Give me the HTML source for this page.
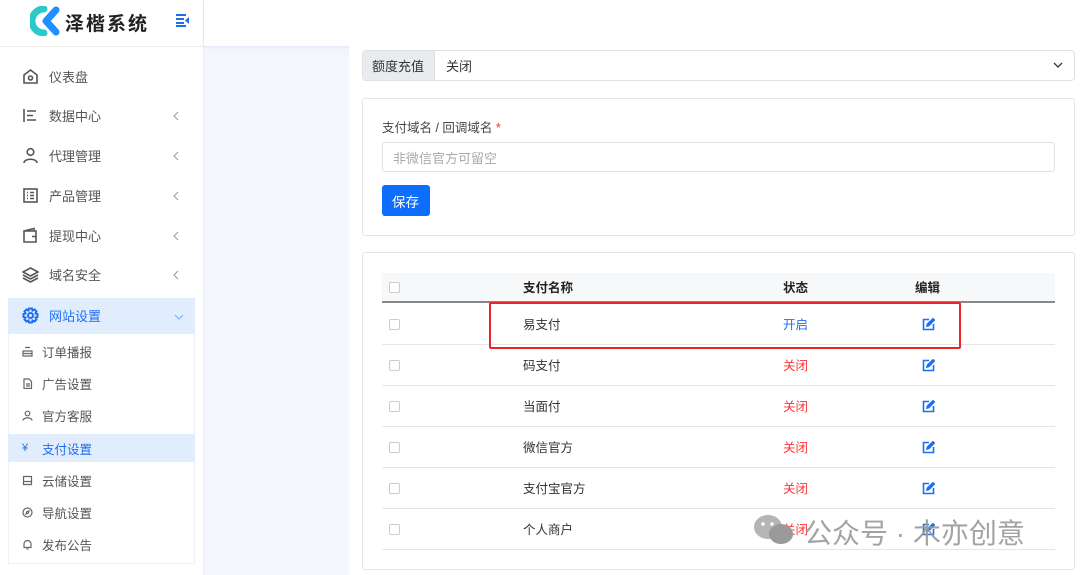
<!DOCTYPE html>
<html><head><meta charset="utf-8"><style>
*{margin:0;padding:0;box-sizing:border-box}
body{width:1080px;height:575px;overflow:hidden;background:#f5f6fd;font-family:"Liberation Sans","Noto Sans CJK SC",sans-serif;font-size:13px;color:#555;position:relative}
.abs{position:absolute}
.side{left:0;top:0;width:203px;height:575px;background:#fff;box-shadow:1px 0 3px rgba(100,100,200,.08)}
.hdr{left:204px;top:0;width:876px;height:46px;background:#fff;box-shadow:0 1px 3px rgba(100,100,220,.12)}
.main{left:349px;top:46px;width:731px;height:529px;background:#fff}
.mi{position:absolute;left:22px;font-size:13px;color:#555;display:flex;align-items:center}
.mi svg{margin-right:10px}
.arr{position:absolute;left:173px}
.si{position:absolute;left:8px;width:187px;height:28px;display:flex;align-items:center;padding-left:14px;font-size:12.5px;color:#555}
.si svg{margin-right:9px}
.row{position:absolute;left:382px;width:673px;height:41px;border-bottom:1px solid #e6e6e6}
.row .cb{position:absolute;left:7px;top:15px;width:11px;height:11px;border:1px solid #ccc;border-radius:2px}
.row .n{position:absolute;left:141px;top:10px;color:#333;font-size:12.5px}
.row .s{position:absolute;left:401px;top:10px;color:#f33;font-size:12.5px}
.row .e{position:absolute;left:540px;top:14px}
</style></head><body>
<div class="abs side">
 <svg class="abs" style="left:30px;top:6px" width="32" height="30" viewBox="0 0 32 30"><path d="M14 3 A12 12 0 1 0 14 27" stroke="#2cc9c9" stroke-width="7" fill="none" stroke-linecap="round"/><path d="M26 4 L16 15 L26 26" stroke="#1e90ff" stroke-width="7" fill="none" stroke-linecap="round" stroke-linejoin="round"/></svg>
 <div class="abs" style="left:65px;top:9px;font-size:19px;font-weight:bold;color:#222;letter-spacing:2px">泽楷系统</div>
 <svg class="abs" style="left:176px;top:14px" width="13" height="13"><g fill="#1e6ff0"><rect x="0" y="0" width="10" height="2"/><rect x="0" y="4" width="8" height="2"/><rect x="0" y="8" width="8" height="2"/><rect x="0" y="11" width="10" height="2"/><path d="M13 3 L9 6.5 L13 10Z"/></g></svg>
 <div class="abs" style="left:0;top:46px;width:203px;height:1px;background:#eee"></div>
 <div class="mi" style="top:67px"><svg width="17" height="17" viewBox="0 0 17 17" fill="none" stroke="#555" stroke-width="1.6"><path d="M2 7 L8.5 2 L15 7 V15 H2Z"/><circle cx="8.5" cy="10" r="2"/></svg>仪表盘</div>
 <div class="mi" style="top:106px"><svg width="17" height="17" viewBox="0 0 17 17" fill="none" stroke="#555" stroke-width="1.6"><path d="M2 2V15M5 4H14M5 8.5H11M5 13H14"/></svg>数据中心</div>
 <div class="mi" style="top:146px"><svg width="17" height="17" viewBox="0 0 17 17" fill="none" stroke="#555" stroke-width="1.6"><circle cx="8.5" cy="5" r="3.3"/><path d="M2 16C2 11 15 11 15 16"/></svg>代理管理</div>
 <div class="mi" style="top:186px"><svg width="17" height="17" viewBox="0 0 17 17" fill="none" stroke="#555" stroke-width="1.6"><rect x="2" y="2" width="13" height="13"/><path d="M5 5.5H6M8 5.5H12M5 8.5H6M8 8.5H12M5 11.5H6M8 11.5H12"/></svg>产品管理</div>
 <div class="mi" style="top:226px"><svg width="17" height="17" viewBox="0 0 17 17" fill="none" stroke="#555" stroke-width="1.6"><path d="M2 4H14V15H2ZM2 4L12 1.5V4M10 9.5H14"/></svg>提现中心</div>
 <div class="mi" style="top:265px"><svg width="17" height="17" viewBox="0 0 17 17" fill="none" stroke="#555" stroke-width="1.6"><path d="M8.5 2L16 6L8.5 10L1 6ZM1 9L8.5 13L16 9M1 12L8.5 16L16 12"/></svg>域名安全</div>
 <svg class="arr" style="top:111px" width="6" height="10"><path d="M5 1L1 5L5 9" stroke="#999" fill="none"/></svg>
 <svg class="arr" style="top:151px" width="6" height="10"><path d="M5 1L1 5L5 9" stroke="#999" fill="none"/></svg>
 <svg class="arr" style="top:191px" width="6" height="10"><path d="M5 1L1 5L5 9" stroke="#999" fill="none"/></svg>
 <svg class="arr" style="top:231px" width="6" height="10"><path d="M5 1L1 5L5 9" stroke="#999" fill="none"/></svg>
 <svg class="arr" style="top:270px" width="6" height="10"><path d="M5 1L1 5L5 9" stroke="#999" fill="none"/></svg>
 <div class="abs" style="left:8px;top:298px;width:187px;height:266px;border:1px solid #eef0f5"></div>
 <div class="abs" style="left:8px;top:298px;width:187px;height:36px;background:#e1ecfd"></div>
 <div class="mi" style="top:306px;color:#1e6ff0"><svg width="17" height="17" viewBox="0 0 17 17" fill="none" stroke="#1e6ff0" stroke-width="2"><circle cx="8.5" cy="8.5" r="2.5"/><path d="M7 1.5H10L10.5 3.5L12.5 2.5L14.5 4.5L13.5 6.5L15.5 7V10L13.5 10.5L14.5 12.5L12.5 14.5L10.5 13.5L10 15.5H7L6.5 13.5L4.5 14.5L2.5 12.5L3.5 10.5L1.5 10V7L3.5 6.5L2.5 4.5L4.5 2.5L6.5 3.5Z"/></svg>网站设置</div>
 <svg class="arr" style="left:174px;top:314px" width="10" height="6"><path d="M1 1L5 5L9 1" stroke="#7aa8f0" fill="none"/></svg>
 <div class="si" style="top:337px"><svg width="11" height="11" fill="none" stroke="#666" stroke-width="1.2"><path d="M3 1.5H8M1 5H10V10H1ZM1 7.5H10"/></svg>订单播报</div>
 <div class="si" style="top:369px"><svg width="11" height="11" fill="none" stroke="#666" stroke-width="1.2"><path d="M2 1H7L9.5 3.5V10.5H2ZM4 6H8M4 8H8"/></svg>广告设置</div>
 <div class="si" style="top:401px"><svg width="11" height="11" fill="none" stroke="#666" stroke-width="1.2"><circle cx="5.5" cy="3.5" r="2.3"/><path d="M1 10.5C1 7 10 7 10 10.5"/></svg>官方客服</div>
 <div class="si" style="top:434px;background:#e1ecfd;color:#1e6ff0"><span style="width:20px;font-size:11px;color:#1e6ff0">¥</span>支付设置</div>
 <div class="si" style="top:466px"><svg width="11" height="11" fill="none" stroke="#666" stroke-width="1.2"><path d="M1.5 1.5H9.5V9.5H1.5ZM1.5 6.5H9.5"/></svg>云储设置</div>
 <div class="si" style="top:498px"><svg width="11" height="11" fill="none" stroke="#666" stroke-width="1.2"><circle cx="5.5" cy="5.5" r="4.5"/><path d="M4 7L5 4.5L7 4L6 6.5Z"/></svg>导航设置</div>
 <div class="si" style="top:530px"><svg width="11" height="11" fill="none" stroke="#666" stroke-width="1.2"><path d="M2 8.5V5A3.5 3.5 0 0 1 9 5V8.5H1.5H9.5M4.5 10H6.5"/></svg>发布公告</div>
</div>
<div class="abs hdr"></div>
<div class="abs main"></div>
<div class="abs" style="left:362px;top:50px;width:713px;height:31px;border:1px solid #dee2e6;border-radius:4px;background:#fff"></div>
<div class="abs" style="left:363px;top:51px;width:72px;height:29px;background:#e9ecef;border-right:1px solid #dee2e6;font-size:13px;color:#333;padding:5px 0 0 9px">额度充值</div>
<div class="abs" style="left:446px;top:56px;color:#333">关闭</div>
<svg class="abs" style="left:1053px;top:62px" width="10" height="6"><path d="M1 1L5 5L9 1" stroke="#333" stroke-width="1.3" fill="none"/></svg>
<div class="abs" style="left:362px;top:98px;width:713px;height:138px;border:1px solid #e6e6e6;border-radius:3px"></div>
<div class="abs" style="left:382px;top:117px;font-size:12.5px;color:#444">支付域名 / 回调域名 <span style="color:#e33">*</span></div>
<div class="abs" style="left:382px;top:142px;width:673px;height:30px;border:1px solid #dee2e6;border-radius:3px;color:#aaa;padding:5px 0 0 10px">非微信官方可留空</div>
<div class="abs" style="left:382px;top:185px;width:48px;height:31px;background:#0d6efd;border-radius:3px;color:#fff;padding:6px 0 0 10px;font-size:13.5px">保存</div>
<div class="abs" style="left:362px;top:252px;width:713px;height:318px;border:1px solid #e6e6e6;border-radius:3px"></div>
<div class="abs" style="left:382px;top:273px;width:673px;height:30px;background:#f7f8fa;border-bottom:2px solid #888"></div>
<div class="abs" style="left:389px;top:282px;width:11px;height:11px;border:1px solid #ccc;border-radius:2px;background:#fff"></div>
<div class="abs" style="left:523px;top:277px;font-weight:bold;color:#222;font-size:12.5px">支付名称</div>
<div class="abs" style="left:783px;top:277px;font-weight:bold;color:#222;font-size:12.5px">状态</div>
<div class="abs" style="left:915px;top:277px;font-weight:bold;color:#222;font-size:12.5px">编辑</div>
<div class="row" style="top:304px"><div class="cb"></div><div class="n">易支付</div><div class="s" style="color:#1e6ff0">开启</div><div class="e"><svg width="13" height="13" viewBox="0 0 13 13" fill="none" stroke="#1e6ff0" stroke-width="1.6"><path d="M7 1.5H1.5V11.5H11.5V6"/><path d="M5 8L5.5 6L11 0.8L12.2 2L6.8 7.5Z" fill="#1e6ff0"/></svg></div></div>
<div class="row" style="top:345px"><div class="cb"></div><div class="n">码支付</div><div class="s">关闭</div><div class="e"><svg width="13" height="13" viewBox="0 0 13 13" fill="none" stroke="#1e6ff0" stroke-width="1.6"><path d="M7 1.5H1.5V11.5H11.5V6"/><path d="M5 8L5.5 6L11 0.8L12.2 2L6.8 7.5Z" fill="#1e6ff0"/></svg></div></div>
<div class="row" style="top:386px"><div class="cb"></div><div class="n">当面付</div><div class="s">关闭</div><div class="e"><svg width="13" height="13" viewBox="0 0 13 13" fill="none" stroke="#1e6ff0" stroke-width="1.6"><path d="M7 1.5H1.5V11.5H11.5V6"/><path d="M5 8L5.5 6L11 0.8L12.2 2L6.8 7.5Z" fill="#1e6ff0"/></svg></div></div>
<div class="row" style="top:427px"><div class="cb"></div><div class="n">微信官方</div><div class="s">关闭</div><div class="e"><svg width="13" height="13" viewBox="0 0 13 13" fill="none" stroke="#1e6ff0" stroke-width="1.6"><path d="M7 1.5H1.5V11.5H11.5V6"/><path d="M5 8L5.5 6L11 0.8L12.2 2L6.8 7.5Z" fill="#1e6ff0"/></svg></div></div>
<div class="row" style="top:468px"><div class="cb"></div><div class="n">支付宝官方</div><div class="s">关闭</div><div class="e"><svg width="13" height="13" viewBox="0 0 13 13" fill="none" stroke="#1e6ff0" stroke-width="1.6"><path d="M7 1.5H1.5V11.5H11.5V6"/><path d="M5 8L5.5 6L11 0.8L12.2 2L6.8 7.5Z" fill="#1e6ff0"/></svg></div></div>
<div class="row" style="top:509px"><div class="cb"></div><div class="n">个人商户</div><div class="s">关闭</div><div class="e"><svg width="13" height="13" viewBox="0 0 13 13" fill="none" stroke="#1e6ff0" stroke-width="1.6"><path d="M7 1.5H1.5V11.5H11.5V6"/><path d="M5 8L5.5 6L11 0.8L12.2 2L6.8 7.5Z" fill="#1e6ff0"/></svg></div></div>
<div class="abs" style="left:489px;top:302px;width:472px;height:47px;border:2px solid #e8262a;border-radius:2px"></div>
<svg class="abs" style="left:752px;top:512px" width="46" height="36" viewBox="0 0 46 36"><ellipse cx="16" cy="15" rx="14" ry="12" fill="#b5b5b5"/><ellipse cx="29" cy="22" rx="12" ry="10" fill="#9a9a9a"/><circle cx="11" cy="12" r="1.8" fill="#fff"/><circle cx="20" cy="12" r="1.8" fill="#fff"/></svg>
<div class="abs" style="left:804px;top:512px;font-size:28px;color:#9a9a9a;opacity:.9">公众号 · 木亦创意</div>
</body></html>
